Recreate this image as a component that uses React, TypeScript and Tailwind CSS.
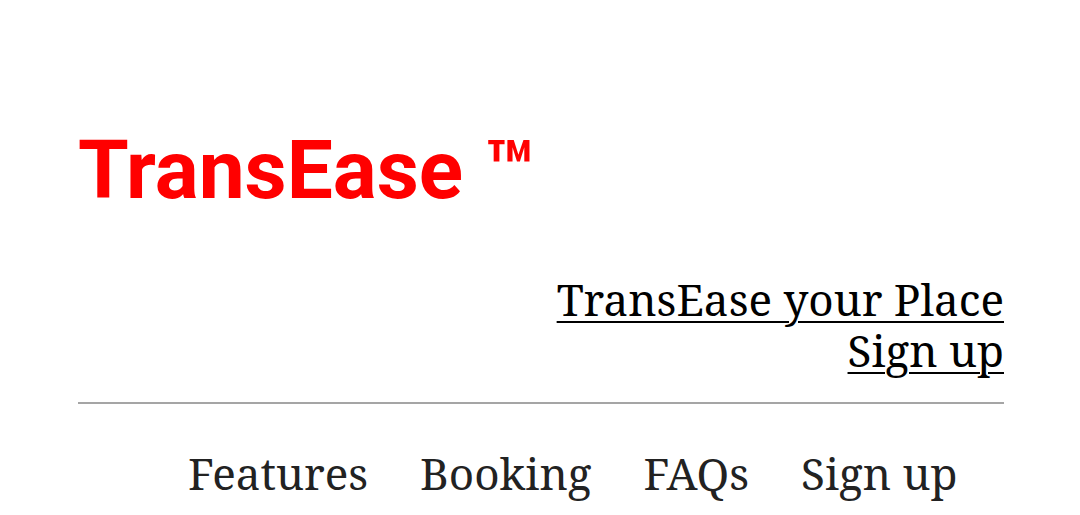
const navItems = ['Features', 'Booking', 'FAQs', 'Sign up'];

export default function App() {
  return (
    <div className="min-h-[515px] bg-white pl-[78px] pr-[76px] pt-[129px]">
      {/* Brand */}
      <h1 className="font-['Roboto',sans-serif] text-[82px] font-bold leading-none text-[#ff0000] whitespace-nowrap">
        TransEase ™
      </h1>

      {/* Right links */}
      <div className="mt-[63px] flex flex-col items-end font-['Noto_Serif',serif] text-[44px] leading-[51px] text-black">
        <a href="#" className="underline decoration-2 underline-offset-[5px]">
          TransEase your Place
        </a>
        <a href="#" className="underline decoration-2 underline-offset-[5px]">
          Sign up
        </a>
      </div>

      <hr className="mt-[26px] border-t-2 border-[#a5a5a5]" />

      {/* Nav */}
      <nav className="mt-[39px] flex gap-[52px] pl-[110px] font-['Noto_Serif',serif] text-[44px] leading-[60px] text-[#222]">
        {navItems.map((item) => (
          <span key={item}>{item}</span>
        ))}
      </nav>
    </div>
  );
}
